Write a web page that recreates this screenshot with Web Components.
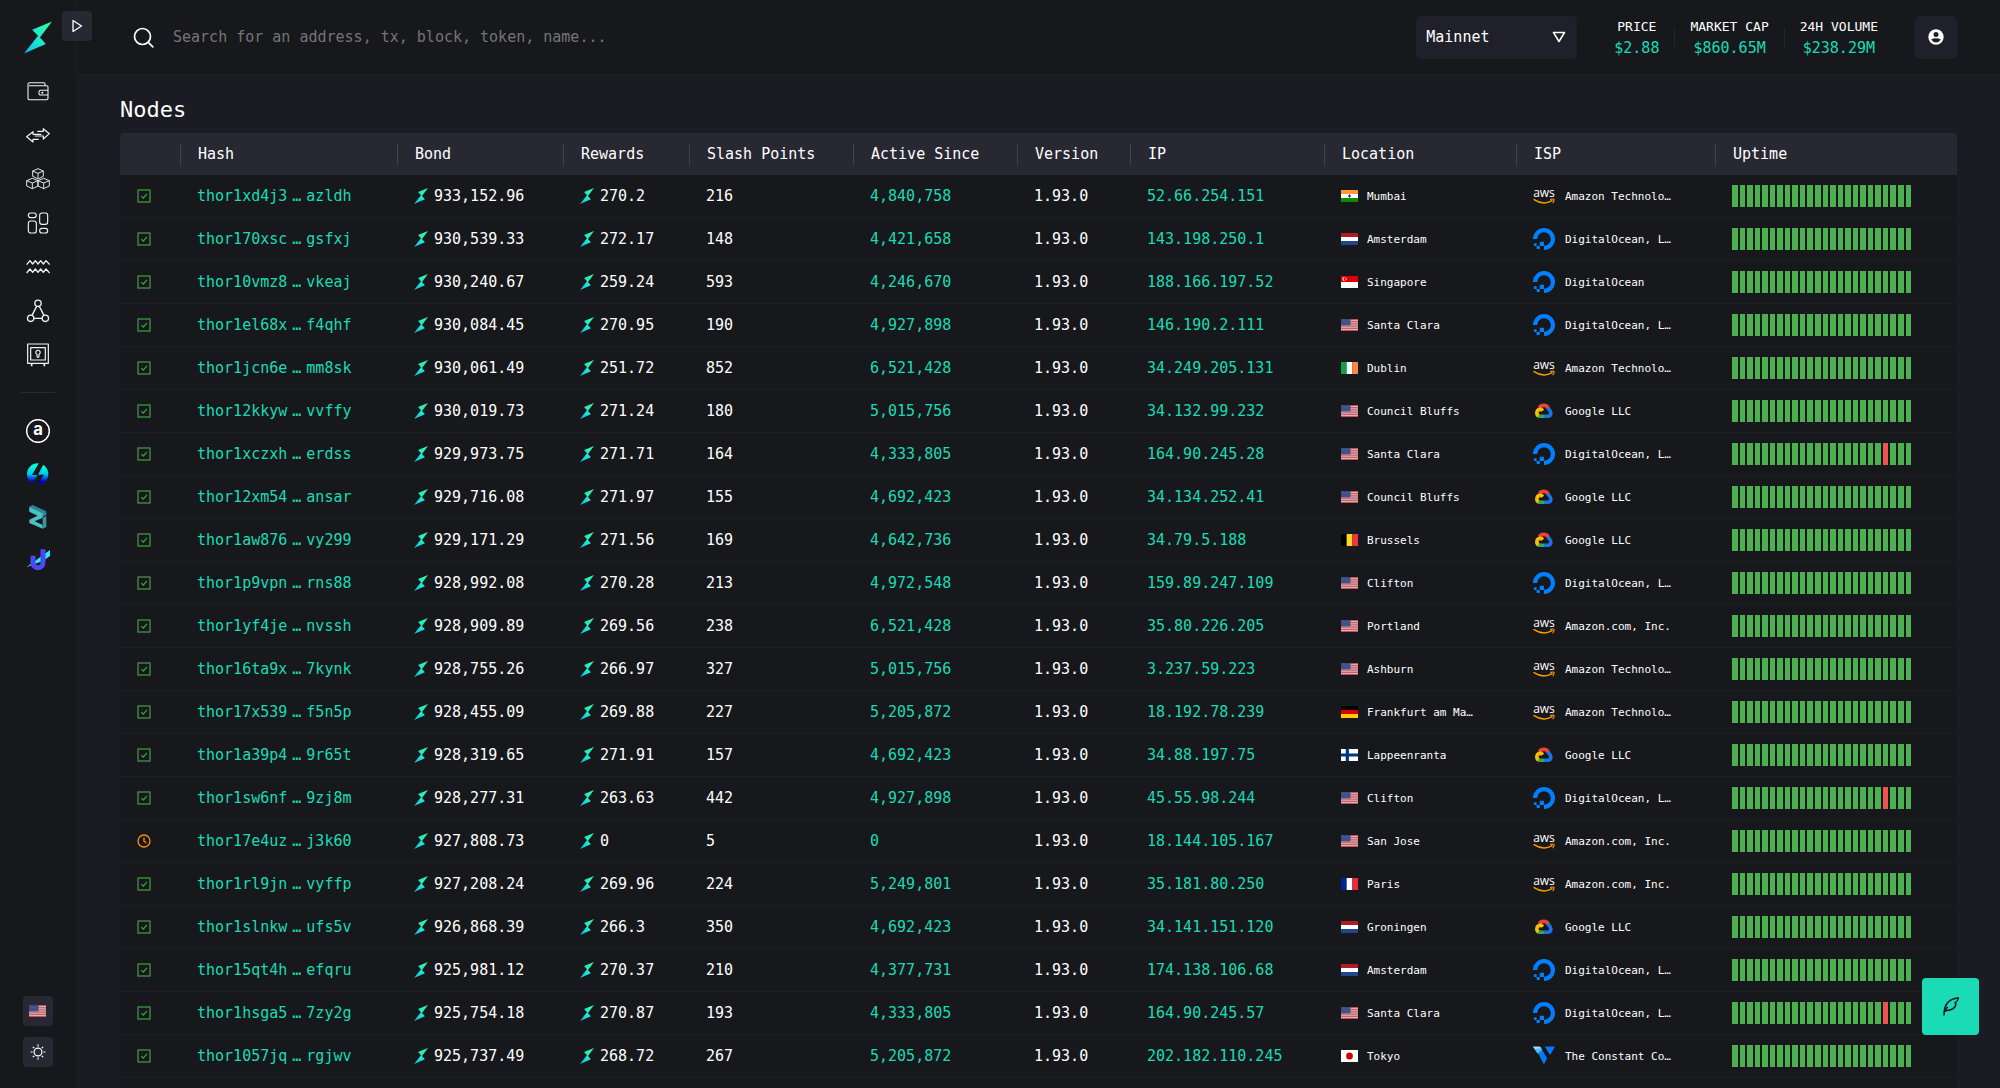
<!DOCTYPE html>
<html lang="en">
<head>
<meta charset="utf-8">
<title>Nodes</title>
<style>
:root{
  --bg:#1b1b23; --card:#17181c; --head:#282833; --box:#20202a; --line:#1d1e23;
  --sep:#40405a; --text:#ffffff; --accent:#1adbb5; --mono:"DejaVu Sans Mono","Liberation Mono",monospace;
}
html,body{margin:0;height:100%;background:var(--bg)}
body{color:var(--text);font:15px/21px var(--mono)}
</style>
</head>
<body>
<app-shell>
  <side-bar slot="side"></side-bar>
  <top-bar slot="top"></top-bar>
  <page-section heading="Nodes"><node-table></node-table></page-section>
  <fab-button slot="fab"></fab-button>
</app-shell>
<script>
const define = (name, render) => customElements.define(name, class extends HTMLElement {
  connectedCallback() {
    if (this.shadowRoot) return;
    this.attachShadow({ mode: 'open' }).innerHTML = render(this);
  }
});

/* ---------- layout ---------- */
define('app-shell', () => `
<style>
:host{display:flex;height:100vh}
.body{flex:1;min-width:0;display:flex;flex-direction:column}
main{flex:1;min-height:0;overflow-y:auto;scrollbar-width:none}
</style>
<slot name="side"></slot>
<div class="body"><slot name="top"></slot><main><slot></slot></main></div>
<slot name="fab"></slot>`);

define('page-section', el => `
<style>
:host{display:block;padding:22px 43px}
h1{margin:0 0 10px;font-size:22px;line-height:26px;font-weight:400}
</style>
<h1>${el.getAttribute('heading')}</h1><slot></slot>`);

/* ---------- token mark ---------- */
let gid = 0;
define('rune-mark', () => { const id = 'g' + gid++; return `
<style>:host{display:block;width:14px;height:16px}svg{display:block;width:100%;height:100%}</style>
<svg viewBox="0 0 86 98" aria-hidden="true"><defs><linearGradient id="${id}" x1="0" y1="1" x2="1" y2="0">
<stop offset="0" stop-color="#00bcf5"/><stop offset=".45" stop-color="#1fe6d0"/><stop offset="1" stop-color="#33ff99"/></linearGradient></defs>
<path fill="url(#${id})" d="M86 0 25 25 43 44 0 98 67 69 49 49Z"/></svg>`; });

/* ---------- flags ---------- */
const h3 = (a,b,c) => `<path fill="${a}" d="M0 0h18v4H0z"/><path fill="${b}" d="M0 4h18v4H0z"/><path fill="${c}" d="M0 8h18v4H0z"/>`;
const v3 = (a,b,c) => `<path fill="${a}" d="M0 0h6v12H0z"/><path fill="${b}" d="M6 0h6v12H6z"/><path fill="${c}" d="M12 0h6v12h-6z"/>`;
const FLAGS = {
  us: `<path fill="#e4c4c8" d="M0 0h18v12H0z"/><path stroke="#bd4550" stroke-width=".95" d="M0 .5h18M0 2.33h18M0 4.17h18M0 6h18M0 7.83h18M0 9.67h18M0 11.5h18"/><path fill="#3a4a82" d="M0 0h10v6.4H0z"/><path stroke="#7683ac" stroke-width=".6" stroke-dasharray=".7 1" d="M.8 1.2h9M1.6 2.6h8M.8 4h9M1.6 5.3h8"/>`,
  in: h3('#ff9933','#ffffff','#128807') + `<circle cx="9" cy="6" r="1.3" fill="#5555bb"/><path stroke="#000088" stroke-width=".6" d="M9 4.3v3.4M7.6 6h2.8"/>`,
  nl: h3('#ae1c28','#ffffff','#21468b'),
  de: h3('#000000','#dd0000','#ffce00'),
  ie: v3('#169b48','#ffffff','#ff883e'),
  be: v3('#000000','#fdda1f','#ef3340'),
  fr: v3('#002395','#ffffff','#ed2939'),
  sg: `<path fill="#fff" d="M0 0h18v12H0z"/><path fill="#df0000" d="M0 0h18v6H0z"/><circle cx="3.4" cy="3" r="2" fill="#fff"/><circle cx="4.3" cy="3" r="1.8" fill="#df0000"/><circle cx="5.4" cy="3" r=".9" fill="#f4a0a0"/>`,
  fi: `<path fill="#fff" d="M0 0h18v12H0z"/><path fill="#003580" d="M0 4.4h18v3.2H0zM5 0h3.4v12H5z"/>`,
  jp: `<path fill="#fff" d="M0 0h18v12H0z"/><circle cx="9" cy="6" r="3.6" fill="#d30000"/>`
};
define('country-flag', el => `
<style>:host{display:block;width:17px;height:12px}svg{display:block;width:100%;height:100%}</style>
<svg viewBox="0 0 18 12" preserveAspectRatio="none" aria-hidden="true">${FLAGS[el.getAttribute('code')]}</svg>`);

/* ---------- provider logos ---------- */
const ISP = {
  aws: `<text x="11" y="12" text-anchor="middle" font-family="Open Sans,sans-serif" font-size="12" font-weight="400" fill="#fff">aws</text>
    <path d="M1 14.6Q10.500 20.800 19 15.600" fill="none" stroke="#ff9900" stroke-width="1.400" stroke-linecap="round"/><path d="M17.600 14.400Q20.500 13.500 21 14.300T20 17.800" fill="none" stroke="#ff9900" stroke-width="1.100" stroke-linecap="round"/>`,
  do: `<path fill="none" stroke="#0080ff" stroke-width="4.200" d="M11 19.900A8.900 8.900 0 1 0 2.100 11"/><path fill="#0080ff" d="M6.800 13.700h4.200v4.200H6.800zM3.600 17.900h3.200v3.200H3.600zM.9 15.200h2.700v2.700H.9z"/>`,
  gcp: `<g fill="none" stroke-width="3.600"><path stroke="#ea4335" d="M6.300 7.800C8.300 4.300 14.300 4.600 15.300 8.600"/><path stroke="#1a73e8" d="M14.700 7.800C15.500 9.300 17.800 10.200 17.900 13 17.900 15.300 16.200 16.300 14.500 16.300H11"/><path stroke="#34a853" d="M11 16.300H7C6 16.300 5.500 16 5 15.700"/><path stroke="#fbbc04" d="M5.400 16C2.900 14 3.500 9.700 7 9.400 8.500 9.300 9.300 10 9.800 10.700"/></g>`,
  vultr: `<path fill="#007bfc" d="M4.600 7.300 7.800 2.500 14 13.200 11.600 18.200q-.6 1.200-1.300 0z"/><path fill="#a5dcf8" d="M0 1.900q0-.4.500-.4H6q1 0 1.500.8l1.300 2.200L4.800 8.300Z"/><path fill="#51b9ff" d="M1.700 4.200 8 3.200l1 1.600-4.200 4z"/><path fill="#007bfc" d="M12.200 2.300q-.4-.8.500-.8h8q1.300 0 .7 1.200L17.800 9q-.7 1.200-1.400 0z"/>`
};
define('isp-logo', el => `
<style>:host{display:block;width:22px;height:22px}svg{display:block;width:100%;height:100%}</style>
<svg viewBox="0 0 22 22" aria-hidden="true">${ISP[el.getAttribute('name')]}</svg>`);

/* ---------- cell parts ---------- */
define('icon-label', () => `
<style>
:host{display:flex;align-items:center;gap:var(--gap,6px)}
</style><slot name="icon"></slot><span><slot></slot></span>`);

define('node-status', el => `
<style>:host{display:block;width:14px;height:14px;margin-left:1px}svg{display:block;width:100%;height:100%;fill:none}</style>
${el.getAttribute('state') === 'standby'
  ? `<svg viewBox="0 0 14 14" role="img" aria-label="Standby" stroke="#fb8c1a" stroke-width="1.300"><circle cx="7" cy="7" r="6"/><path d="M7 3.500V7.300L9.400 8.800"/></svg>`
  : `<svg viewBox="0 0 14 14" role="img" aria-label="Active" stroke="#43a047" stroke-width="1.200"><rect x="1" y="1" width="12" height="12"/><path d="M4.300 7.200 6.300 9.200 9.900 4.900"/></svg>`}`);

define('uptime-bars', el => {
  const down = el.hasAttribute('down') ? Number(el.getAttribute('down')) : -1;
  return `
<style>
:host{display:flex;gap:2px;width:179px;height:22px}
i{flex:1;background:#4caf50}
i.down{background:#ef5350}
</style>${Array.from({length: 24}, (_, i) => `<i${i === down ? ' class="down"' : ''}></i>`).join('')}`;
});

/* ---------- table ---------- */
const NODES = `xd4j3 azldh|933,152.96|270.2|216|4,840,758|52.66.254.151|in|Mumbai|aws|Amazon Technolo…
70xsc gsfxj|930,539.33|272.17|148|4,421,658|143.198.250.1|nl|Amsterdam|do|DigitalOcean, L…
0vmz8 vkeaj|930,240.67|259.24|593|4,246,670|188.166.197.52|sg|Singapore|do|DigitalOcean
el68x f4qhf|930,084.45|270.95|190|4,927,898|146.190.2.111|us|Santa Clara|do|DigitalOcean, L…
jcn6e mm8sk|930,061.49|251.72|852|6,521,428|34.249.205.131|ie|Dublin|aws|Amazon Technolo…
2kkyw vvffy|930,019.73|271.24|180|5,015,756|34.132.99.232|us|Council Bluffs|gcp|Google LLC
xczxh erdss|929,973.75|271.71|164|4,333,805|164.90.245.28|us|Santa Clara|do|DigitalOcean, L…|20
2xm54 ansar|929,716.08|271.97|155|4,692,423|34.134.252.41|us|Council Bluffs|gcp|Google LLC
aw876 vy299|929,171.29|271.56|169|4,642,736|34.79.5.188|be|Brussels|gcp|Google LLC
p9vpn rns88|928,992.08|270.28|213|4,972,548|159.89.247.109|us|Clifton|do|DigitalOcean, L…
yf4je nvssh|928,909.89|269.56|238|6,521,428|35.80.226.205|us|Portland|aws|Amazon.com, Inc.
6ta9x 7kynk|928,755.26|266.97|327|5,015,756|3.237.59.223|us|Ashburn|aws|Amazon Technolo…
7x539 f5n5p|928,455.09|269.88|227|5,205,872|18.192.78.239|de|Frankfurt am Ma…|aws|Amazon Technolo…
a39p4 9r65t|928,319.65|271.91|157|4,692,423|34.88.197.75|fi|Lappeenranta|gcp|Google LLC
sw6nf 9zj8m|928,277.31|263.63|442|4,927,898|45.55.98.244|us|Clifton|do|DigitalOcean, L…|20
7e4uz j3k60|927,808.73|0|5|0|18.144.105.167|us|San Jose|aws|Amazon.com, Inc.
rl9jn vyffp|927,208.24|269.96|224|5,249,801|35.181.80.250|fr|Paris|aws|Amazon.com, Inc.
slnkw ufs5v|926,868.39|266.3|350|4,692,423|34.141.151.120|nl|Groningen|gcp|Google LLC
5qt4h efqru|925,981.12|270.37|210|4,377,731|174.138.106.68|nl|Amsterdam|do|DigitalOcean, L…
hsga5 7zy2g|925,754.18|270.87|193|4,333,805|164.90.245.57|us|Santa Clara|do|DigitalOcean, L…|20
057jq rgjwv|925,737.49|268.72|267|5,205,872|202.182.110.245|jp|Tokyo|vultr|The Constant Co…`
  .split('\n').map(line => line.split('|'));
const COLS = [['',61],['Hash',217],['Bond',166],['Rewards',126],['Slash Points',164],['Active Since',164],['Version',113],['IP',194],['Location',192],['ISP',199],['Uptime',241]];
const row = ([hash, bond, reward, slash, since, ip, code, city, isp, provider, down]) => {
  const [a, b] = hash.split(' ');
  return `<tr>
<td><node-status state="${since === '0' ? 'standby' : 'active'}"></node-status></td>
<td><a class="hash" href="#node"><span>thor1${a}</span><span>…</span><span>${b}</span></a></td>
<td><icon-label><rune-mark slot="icon"></rune-mark>${bond}</icon-label></td>
<td><icon-label><rune-mark slot="icon"></rune-mark>${reward}</icon-label></td>
<td>${slash}</td>
<td><a href="#block">${since}</a></td>
<td>1.93.0</td>
<td><a href="#ip">${ip}</a></td>
<td><icon-label class="small place"><country-flag slot="icon" code="${code}"></country-flag>${city}</icon-label></td>
<td><icon-label class="small isp"><isp-logo slot="icon" name="${isp}"></isp-logo>${provider}</icon-label></td>
<td><uptime-bars${down ? ` down="${down}"` : ''}></uptime-bars></td></tr>`;
};
define('node-table', () => `
<style>
:host{display:block;border-radius:4px 4px 0 0;overflow:hidden;background:var(--card)}
table{width:100%;table-layout:fixed;border-collapse:separate;border-spacing:0}
th,td{box-sizing:border-box;height:43px;padding:0 0 0 16px;text-align:left;font-weight:400;white-space:nowrap}
th{height:42px;padding-left:17px;background:var(--head)}
th:not(:last-child){background:linear-gradient(var(--sep),var(--sep)) right center/1px 21px no-repeat var(--head)}
td{border-bottom:1px solid var(--line)}
a{color:var(--accent);text-decoration:none}
.hash{display:flex;gap:5px}
.small{font-size:11px}
.place{--gap:9px}
.isp{--gap:10px}
</style>
<table><colgroup>${COLS.map(c => `<col style="width:${c[1]}px">`).join('')}</colgroup>
<thead><tr>${COLS.map(c => c[0] ? `<th scope="col">${c[0]}</th>` : '<th></th>').join('')}</tr></thead>
<tbody>${NODES.map(row).join('')}<tr>${'<td></td>'.repeat(10)}<td><uptime-bars></uptime-bars></td></tr></tbody></table>`);

/* ---------- sidebar ---------- */
const NAV = [
 ['Wallet', `<path d="M57 20v-6q0-3-3-3H11q-5 0-5 5v42q0 4 4 4h52q4 0 4-4V24q0-4-4-4H9"/><path d="M66 34H44q-5 0-5 4v6q0 4 5 4h22"/><circle cx="49" cy="41" r="1.500"/>`, 3.2],
 ['Swap', `<path d="M34 25H52V17L70 32 52 48V39H26"/><path d="M38 49H21V57L2 41 21 26V34H46"/>`, 3.6],
 ['Blocks', `<path d="M36 5 52 12V28L36 36 20 28V12ZM20 12 36 19 52 12M36 19V36"/><path d="M19 34 36 41V57L19 65 2 57V41ZM2 41 19 48 36 41M19 48V65"/><path d="M53 34 70 41V57L53 65 36 57V41ZM36 41 53 48 70 41M53 48V65"/>`, 2.8],
 ['Dashboard', `<rect x="7" y="6" width="24" height="14" rx="7"/><rect x="41" y="6" width="24" height="34" rx="7"/><rect x="7" y="30" width="24" height="36" rx="7"/><rect x="41" y="52" width="24" height="14" rx="7"/>`, 3.4],
 ['Pools', `<path d="M2 29 12 17 20 27 28 17 36 27 44 17 52 27 60 17 71 29"/><path d="M2 54 12 42 20 52 28 42 36 52 44 42 52 52 60 42 71 54"/>`, 4],
 ['Nodes', `<circle cx="36" cy="13" r="9.500"/><circle cx="14" cy="58" r="9.500"/><circle cx="58" cy="58" r="9.500"/><path d="M32 22 18 49M40 22 54 49M24 58H48"/>`, 4],
 ['Vaults', `<rect x="5" y="3" width="62" height="58"/><rect x="14" y="14" width="44" height="37"/><path d="M33 34A6.500 6.500 0 1 1 39 34V40Q39 43 36 43T33 40Z"/><path d="M17 62V70M55 62V70" stroke-width="5"/>`, 3.6]
];
const APPS = [
 ['Asgardex', `<circle cx="36" cy="36" r="34" fill="none" stroke="#fff" stroke-width="4.500"/><text x="36" y="49" text-anchor="middle" font-family="Inter,sans-serif" font-weight="700" font-size="50" fill="#fff">a</text>`],
 ['THORSwap', `<defs><linearGradient id="ts" x1="0" y1="0" x2="0" y2="1"><stop offset=".15" stop-color="#00ffd0"/><stop offset=".5" stop-color="#00c8f0"/><stop offset=".85" stop-color="#0000d8"/></linearGradient></defs><circle cx="35" cy="36" r="32" fill="url(#ts)"/><path fill="#17181c" d="M40 1 18 39H35L12 72 32 74 54 38H36L54 4Z"/>`],
 ['Zilliqa', `<path fill="#2b8792" d="M10 5 20 0 61 19V30L50 35 10 15Z"/><path fill="#49c1bf" d="M10 7 50 25V38L26 49 50 60V71L10 54V44L35 32 10 20Z"/><path fill="#35959d" d="M50 38 61 33V66L50 71Z"/>`],
 ['Unstoppable', `<path fill="#2fe9ff" d="M1 58 72 6V24L52 38 20 50Z"/><path fill="none" stroke="#4c47f7" stroke-width="15" d="M21 23V44A15 15 0 0 0 51 44V4"/>`]
];
define('side-bar', () => `
<style>
:host{box-sizing:border-box;flex:none;display:flex;flex-direction:column;align-items:center;width:77px;padding:21px 1px 21px 0;background:var(--card);border-right:1px solid var(--line);position:relative}
.logo{display:block;margin-bottom:25px}
.logo rune-mark{width:28px;height:33px}
nav{display:flex;flex-direction:column;align-items:center;gap:20px}
nav a,nav svg{display:block;width:24px;height:24px}
.apps{gap:19px}
hr{width:34px;height:1px;margin:25px 0 26px;border:0;background:#2a2b31}
button{display:grid;place-items:center;width:30px;height:30px;padding:0;border:0;border-radius:4px;background:var(--head)}
.toggle{position:absolute;left:62px;top:11px;z-index:2}
.tools{margin-top:auto;display:grid;gap:11px}
</style>
<a class="logo" href="#home" aria-label="Home"><rune-mark></rune-mark></a>
<button class="toggle" aria-label="Expand menu"><svg width="12" height="14" viewBox="0 0 12 14" fill="none" stroke="#fff" stroke-width="1.300" stroke-linejoin="round"><path d="M2 1.500 10.500 7 2 12.500Z"/></svg></button>
<nav aria-label="Main">${NAV.map(([n, s, w]) => `<a href="#${n}" aria-label="${n}"><svg viewBox="0 0 72 72" fill="none" stroke="#f2f2f4" stroke-width="${w}" stroke-linejoin="round">${s}</svg></a>`).join('')}</nav>
<hr>
<nav class="apps" aria-label="Apps">${APPS.map(([n, s]) => `<a href="#${n}" aria-label="${n}"><svg viewBox="0 0 72 72">${s}</svg></a>`).join('')}</nav>
<div class="tools">
<button aria-label="Language"><country-flag code="us"></country-flag></button>
<button aria-label="Theme"><svg width="16" height="16" viewBox="0 0 16 16" fill="none" stroke="#fff" stroke-width="1.200"><circle cx="8" cy="8" r="3.900"/><path d="M8 .6V2.600M8 13.400V15.400M.6 8H2.600M13.400 8H15.400M2.800 2.800 4.200 4.200M11.800 11.800 13.200 13.200M2.800 13.200 4.200 11.800M11.800 4.200 13.200 2.800"/></svg></button>
</div>`);

/* ---------- header ---------- */
define('market-stat', el => `
<style>
:host{display:flex;flex-direction:column;align-items:center;gap:1px;padding:0 15px;white-space:nowrap}
span{font-size:13px}
b{font-weight:400;color:var(--accent)}
</style><span>${el.getAttribute('label')}</span><b><slot></slot></b>`);

define('top-bar', () => `
<style>
:host{box-sizing:border-box;flex:none;display:flex;align-items:center;gap:22px;height:75px;padding:0 43px 0 56px;background:var(--card);border-bottom:1px solid var(--line)}
.search{flex:1;display:flex;align-items:center;gap:19px}
.search svg{flex:none}
input{flex:1;min-width:0;padding:0;border:0;outline:0;background:none;color:inherit;font:inherit}
input::placeholder{color:#757575;opacity:1}
.net{display:grid;width:161px;height:43px}
.net>*{grid-area:1/1}
select{appearance:none;width:100%;margin:0;padding:0 10px;border:0;border-radius:5px;background:var(--box);color:inherit;font:inherit}
.net svg{align-self:center;justify-self:end;margin-right:11px;pointer-events:none}
.stats{display:flex;align-items:center}
.stats i{width:1px;height:19px;background:#25262c}
.user{display:grid;place-items:center;width:42px;height:43px;padding:0;border:0;border-radius:5px;background:var(--box)}
</style>
<label class="search"><svg width="21" height="21" viewBox="0 0 21 21" fill="none" stroke="#fff" stroke-width="1.700" stroke-linecap="round" aria-hidden="true"><circle cx="9.500" cy="9.500" r="8"/><path d="M15.300 15.300 19.800 19.800"/></svg>
<input type="text" aria-label="Search" placeholder="Search for an address, tx, block, token, name..."></label>
<div class="net"><select aria-label="Network"><option>Mainnet</option></select><svg width="14" height="12" viewBox="0 0 14 12" fill="none" stroke="#fff" stroke-width="1.500" stroke-linejoin="round" aria-hidden="true"><path d="M1.500 1.500H12.500L7 10.500Z"/></svg></div>
<div class="stats"><market-stat label="PRICE">$2.88</market-stat><i></i><market-stat label="MARKET CAP">$860.65M</market-stat><i></i><market-stat label="24H VOLUME">$238.29M</market-stat></div>
<button class="user" aria-label="Account"><svg width="16" height="16" viewBox="0 0 16 16"><circle cx="8" cy="8" r="7.700" fill="#fff"/><circle cx="8" cy="5.500" r="2.500" fill="#20202a"/><path fill="#20202a" d="M3.200 10.600Q5 9.200 8 9.200T12.800 10.600Q11.200 13.400 8 13.400T3.200 10.600Z"/></svg></button>`);

define('fab-button', () => `
<style>
:host{position:fixed;right:21px;bottom:53px}
button{display:grid;place-items:center;width:57px;height:57px;padding:0;border:0;border-radius:4px;background:var(--accent)}
</style>
<button aria-label="Feedback"><svg width="16" height="19" viewBox="0 0 48 57" fill="none" stroke="#17181c" stroke-width="4.500" stroke-linecap="round" stroke-linejoin="round"><path d="M3 54C3 28 14 5 46 3 45 11 41 15 36 17L39 20C38 33 28 40 8 41"/><path d="M5 44C8 38 10 34 13 31"/></svg></button>`);
</script>
</body>
</html>
